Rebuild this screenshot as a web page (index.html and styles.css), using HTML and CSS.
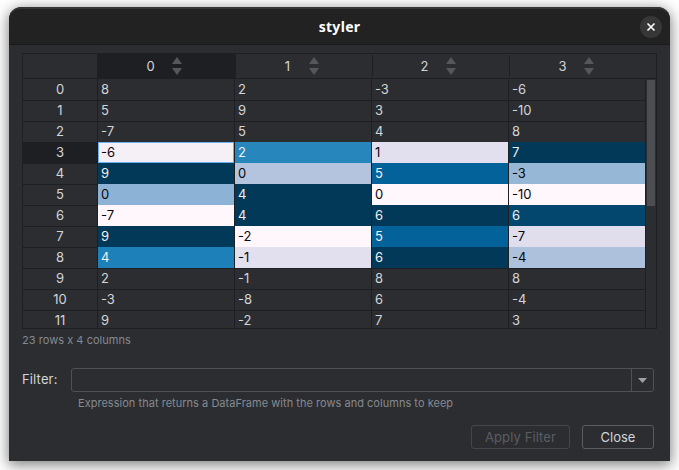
FILE: index.html
```html
<!DOCTYPE html>
<html lang="en">
<head>
<meta charset="utf-8">
<title>styler</title>
<link rel="stylesheet" href="styles.css">
</head>
<body>
<main class="window">
  <header class="titlebar">
    <h1 class="title">styler</h1>
    <button class="close" aria-label="Close window"><svg width="22" height="22" viewBox="0 0 22 22"><path d="M7.5 7.5l7 7M14.5 7.5l-7 7" stroke="#fff" stroke-width="1.6" fill="none"/></svg></button>
  </header>
  <section class="content">
    <div class="table">
      <div class="head" id="head"><div class="corner"></div></div>
      <div class="body">
        <div class="rows" id="rows"></div>
        <div class="scroll"><div class="thumb"></div></div>
      </div>
    </div>
    <p class="count">23 rows x 4 columns</p>
    <div class="filter">
      <span class="label">Filter:</span>
      <div class="combo">
        <div class="field"></div>
        <div class="drop"><svg width="9" height="5" viewBox="0 0 9 5"><path d="M0 0h9L4.5 5z" fill="#9da0a8"/></svg></div>
      </div>
    </div>
    <p class="hint">Expression that returns a DataFrame with the rows and columns to keep</p>
    <div class="actions">
      <button class="btn apply" disabled>Apply Filter</button>
      <button class="btn">Close</button>
    </div>
  </section>
</main>
<script src="table.js"></script>
</body>
</html>
```
FILE: styles.css
```css
* { box-sizing: border-box; }
body {
  margin: 0;
  width: 679px;
  height: 470px;
  padding: 7px 9px 9px;
  overflow: hidden;
  background: #fff;
  font: 13px/20px Inter, "Liberation Sans", sans-serif;
  color: #d3d5da;
}
p, h1 { margin: 0; }
button { font: inherit; color: inherit; padding: 0; }
.window {
  width: 661px;
  height: 454px;
  background: #2b2d30;
  border-radius: 12px 12px 0 0;
  box-shadow: 0 3px 14px 1px rgba(0, 0, 0, .5);
  overflow: hidden;
}
.titlebar {
  height: 38px;
  display: grid;
  grid-template-columns: 1fr auto 1fr;
  align-items: center;
  padding-right: 8px;
  background: #222;
  border-top: 2px solid #363637;
  border-bottom: 1px solid #1a1a1a;
  border-radius: 12px 12px 0 0;
}
.title {
  grid-column: 2;
  padding-left: 8px;
  font: bold 14px/20px "Noto Sans", "Open Sans", sans-serif;
  letter-spacing: .3px;
  color: #fff;
}
.close {
  justify-self: end;
  width: 22px;
  height: 22px;
  border: 0;
  border-radius: 50%;
  background: #373737;
}
.close svg { display: block; }
.content { padding: 8px 13px 0; }
.table {
  width: 635px;
  height: 276px;
  border: 1px solid #1e1f22;
  overflow: hidden;
}
.head {
  height: 25px;
  display: grid;
  grid-template-columns: 74px 138px 137px 137px 137px;
  border-bottom: 1px solid #1e1f22;
}
.col {
  display: flex;
  align-items: center;
  justify-content: center;
  gap: 16px;
  margin: 1px 0;
  padding-right: 6px;
  border-left: 1px solid #1e1f22;
}
.col:last-child { padding-right: 5px; }
.col + .col:not(:last-child) { padding-right: 7px; }
.col.active { margin: 0; background: #1e1f22; }
.col span { width: 10px; text-align: center; }
.col svg { display: block; }
.body { display: flex; height: 250px; }
.rows { width: 623px; }
.row {
  display: grid;
  grid-template-columns: 75px repeat(4, 137px);
  height: 21px;
}
.cell {
  border-right: 1px solid #1e1f22;
  border-bottom: 1px solid #1e1f22;
  padding-left: 3px;
  line-height: 21px;
}
.index { padding-left: 0; text-align: center; }
.index.active { background: #1e1f22; }
.dark-text { color: #080808; }
.light-text { color: #f1f1f1; }
.focused { box-shadow: inset 0 0 0 1px #6cb1ed; }
.scroll { width: 10px; padding: 1px 1px 0; }
.thumb { height: 126px; background: #4d4e51; }
.count {
  margin-top: 1px;
  font-size: 11px;
  letter-spacing: .04px;
  color: #868a91;
}
.filter {
  display: flex;
  align-items: center;
  margin-top: 18px;
  height: 24px;
}
.label { width: 49px; line-height: 22px; letter-spacing: .15px; padding-bottom: 2px; }
.combo {
  display: flex;
  width: 583px;
  height: 24px;
  border: 1px solid #4e5157;
  border-radius: 3px;
}
.field { flex: 1; }
.drop {
  width: 22px;
  display: grid;
  place-items: center;
  border-left: 1px solid #4e5157;
}
.hint {
  margin: 1px 0 0 56px;
  font-size: 11px;
  letter-spacing: .03px;
  color: #868a91;
}
.actions {
  display: flex;
  justify-content: flex-end;
  gap: 12px;
  margin: 12px 3px 0 0;
}
.btn {
  width: 72px;
  height: 24px;
  border: 1px solid #5a5d63;
  border-radius: 3px;
  background: transparent;
}
.apply { width: 99px; border-color: #43454a; color: #5a5d63; letter-spacing: .1px; }
```
FILE: table.js
```js
const rows = [
  [8, 2, -3, -6], [5, 9, 3, -10], [-7, 5, 4, 8], [-6, 2, 1, 7],
  [9, 0, 5, -3], [0, 4, 0, -10], [-7, 4, 6, 6], [9, -2, 5, -7],
  [4, -1, 6, -4], [2, -1, 8, 8], [-3, -8, 6, -4], [9, -2, 7, 3]
];
const colors = {
  3: ["#f5eff6", "#2786bb", "#e2dfee", "#023858"],
  4: ["#023858", "#b4c4df", "#04629a", "#97b7d7"],
  5: ["#8cb3d5", "#023858", "#fff7fb", "#fff7fb"],
  6: ["#fff7fb", "#023858", "#023858", "#03476f"],
  7: ["#023858", "#fff7fb", "#04629a", "#e0deed"],
  8: ["#1e80b8", "#e2dfee", "#023858", "#adc1dd"]
};
const isLight = hex => parseInt(hex.slice(1, 3), 16) > 128;

const arrows = '<svg width="10" height="18" viewBox="0 0 10 18"><path d="M0 7L5 0l5 7zM0 11h10l-5 7z" fill="#55575b"/></svg>';
document.getElementById("head").insertAdjacentHTML("beforeend",
  [0, 1, 2, 3].map(i => `<div class="col${i ? "" : " active"}"><span>${i}</span>${arrows}</div>`).join(""));

document.getElementById("rows").innerHTML = rows.map((values, r) => {
  const cells = values.map((value, c) => {
    const color = colors[r] && colors[r][c];
    if (!color) return `<div class="cell">${value}</div>`;
    const tone = isLight(color) ? "dark-text" : "light-text";
    const focus = r === 3 && c === 0 ? " focused" : "";
    return `<div class="cell ${tone}${focus}" style="background-color:${color}">${value}</div>`;
  }).join("");
  return `<div class="row"><div class="cell index${r === 3 ? " active" : ""}">${r}</div>${cells}</div>`;
}).join("");
```
